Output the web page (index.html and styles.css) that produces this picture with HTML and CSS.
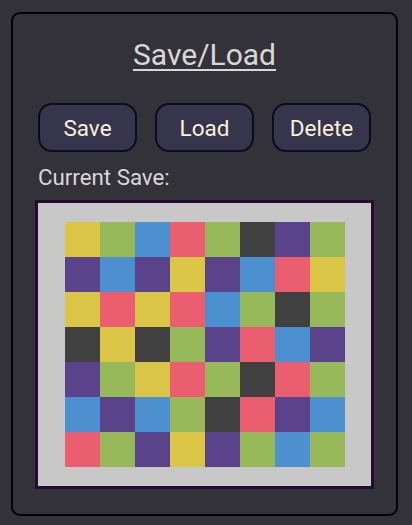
FILE: index.html
```html
<!DOCTYPE html>
<html>
<head>
<meta charset="utf-8">
<link rel="stylesheet" href="styles.css">
</head>
<body>
<div class="panel">
  <h1 class="title">Save/Load</h1>
  <div class="buttons">
    <button class="btn">Save</button>
    <button class="btn">Load</button>
    <button class="btn">Delete</button>
  </div>
  <div class="label">Current Save:</div>
  <div class="frame">
    <div class="grid">
      <i class="y"></i><i class="g"></i><i class="b"></i><i class="r"></i><i class="g"></i><i class="d"></i><i class="p"></i><i class="g"></i>
      <i class="p"></i><i class="b"></i><i class="p"></i><i class="y"></i><i class="p"></i><i class="b"></i><i class="r"></i><i class="y"></i>
      <i class="y"></i><i class="r"></i><i class="y"></i><i class="r"></i><i class="b"></i><i class="g"></i><i class="d"></i><i class="g"></i>
      <i class="d"></i><i class="y"></i><i class="d"></i><i class="g"></i><i class="p"></i><i class="r"></i><i class="b"></i><i class="p"></i>
      <i class="p"></i><i class="g"></i><i class="y"></i><i class="r"></i><i class="g"></i><i class="d"></i><i class="r"></i><i class="g"></i>
      <i class="b"></i><i class="p"></i><i class="b"></i><i class="g"></i><i class="d"></i><i class="r"></i><i class="p"></i><i class="b"></i>
      <i class="r"></i><i class="g"></i><i class="p"></i><i class="y"></i><i class="p"></i><i class="g"></i><i class="b"></i><i class="g"></i>
    </div>
  </div>
</div>
</body>
</html>
```
FILE: styles.css
```css
html, body {
  margin: 0;
  padding: 0;
  background: #333238;
  font-family: Roboto, "Liberation Sans", sans-serif;
}
body {
  padding: 12px 14px 9px 11px;
}
.panel {
  border: 2px solid #000;
  border-radius: 9px;
  background: #333238;
  padding: 23px 22px 25px 22px;
  display: flex;
  flex-direction: column;
}
.title {
  margin: 0;
  font-size: 30px;
  line-height: 36px;
  font-weight: 400;
  color: #d8d8d8;
  text-align: center;
  text-decoration: underline;
  text-decoration-thickness: 2px;
  text-underline-offset: 4px;
}
.buttons {
  margin-top: 30px;
  padding: 0 3px;
  display: flex;
  justify-content: space-between;
}
.btn {
  width: 99px;
  height: 49px;
  border: 2px solid #0e0b1e;
  border-radius: 14px;
  background: #35354b;
  color: #fbf0dd;
  font-family: Roboto, "Liberation Sans", sans-serif;
  font-size: 22.5px;
  padding: 2px 0 0 0;
  line-height: 43px;
}
.label {
  margin-top: 12px;
  padding-left: 3px;
  font-size: 22.3px;
  line-height: 26px;
  color: #d8d8d8;
}
.frame {
  margin-top: 10px;
  border: 3px solid #230b33;
  background: #c8c8c8;
  height: 283px;
  display: flex;
  align-items: center;
  justify-content: center;
}
.grid {
  display: grid;
  grid-template-columns: repeat(8, 35px);
  grid-template-rows: repeat(7, 35px);
}
.grid i { display: block; }
.y { background: #dbc547; }
.g { background: #97b95a; }
.b { background: #4c90d0; }
.r { background: #ea5e6f; }
.p { background: #5b438b; }
.d { background: #404040; }
```
